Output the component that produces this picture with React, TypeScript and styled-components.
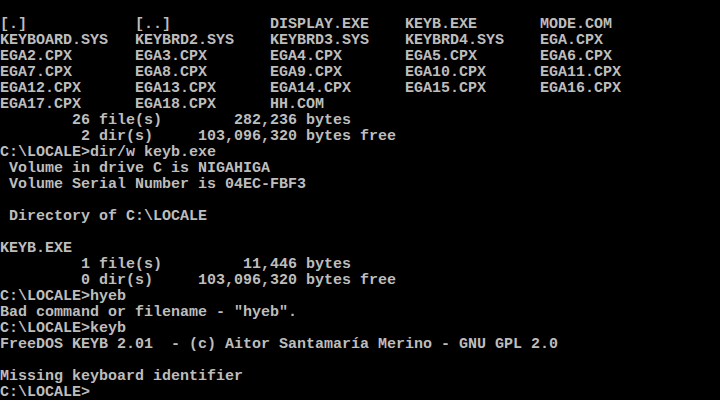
import styled, { createGlobalStyle } from 'styled-components';

const GlobalStyle = createGlobalStyle`
  html, body {
    margin: 0;
    padding: 0;
    background: #000;
  }
`;

const Screen = styled.div`
  box-sizing: border-box;
  width: 720px;
  height: 400px;
  padding-top: 1px;
  background: #000;
  color: #bdbdbd;
  font-family: "Liberation Mono", "DejaVu Sans Mono", monospace;
  font-size: 15px;
  font-weight: bold;
  overflow: hidden;
  display: flex;
  flex-direction: column;
`;

const Row = styled.div`
  flex: none;
  height: 16px;
  line-height: 16px;
  white-space: pre;
`;

// dir /w listing uses 15 char wide columns
const cols = (items: string[]) => items.map((s) => s.padEnd(15, ' ')).join('').trimEnd();

const lines: string[] = [
  '',
  cols(['[.]', '[..]', 'DISPLAY.EXE', 'KEYB.EXE', 'MODE.COM']),
  cols(['KEYBOARD.SYS', 'KEYBRD2.SYS', 'KEYBRD3.SYS', 'KEYBRD4.SYS', 'EGA.CPX']),
  cols(['EGA2.CPX', 'EGA3.CPX', 'EGA4.CPX', 'EGA5.CPX', 'EGA6.CPX']),
  cols(['EGA7.CPX', 'EGA8.CPX', 'EGA9.CPX', 'EGA10.CPX', 'EGA11.CPX']),
  cols(['EGA12.CPX', 'EGA13.CPX', 'EGA14.CPX', 'EGA15.CPX', 'EGA16.CPX']),
  cols(['EGA17.CPX', 'EGA18.CPX', 'HH.COM']),
  '        26 file(s)        282,236 bytes',
  '         2 dir(s)     103,096,320 bytes free',
  'C:\\LOCALE>dir/w keyb.exe',
  ' Volume in drive C is NIGAHIGA',
  ' Volume Serial Number is 04EC-FBF3',
  '',
  ' Directory of C:\\LOCALE',
  '',
  'KEYB.EXE',
  '         1 file(s)         11,446 bytes',
  '         0 dir(s)     103,096,320 bytes free',
  'C:\\LOCALE>hyeb',
  'Bad command or filename - "hyeb".',
  'C:\\LOCALE>keyb',
  'FreeDOS KEYB 2.01  - (c) Aitor Santamaría Merino - GNU GPL 2.0',
  '',
  'Missing keyboard identifier',
  'C:\\LOCALE>',
];

export default function App() {
  return (
    <>
      <GlobalStyle />
      <Screen>
        {lines.map((l, i) => (
          <Row key={i}>{l}</Row>
        ))}
      </Screen>
    </>
  );
}
